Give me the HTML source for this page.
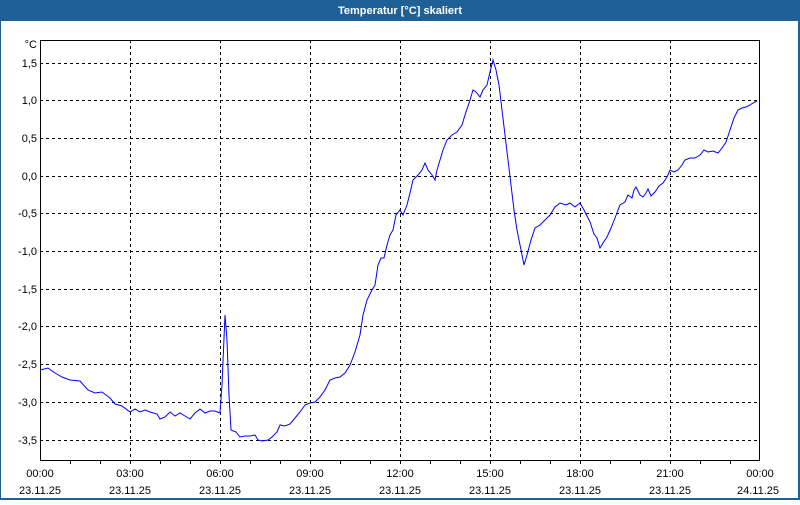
<!DOCTYPE html><html><head><style>body{margin:0;width:800px;height:500px;overflow:hidden;background:#fff;font-family:"Liberation Sans",sans-serif}</style></head><body>
<svg width="800" height="500" xmlns="http://www.w3.org/2000/svg" font-family="Liberation Sans, sans-serif" font-size="11">
<rect x="0" y="0" width="800" height="500" fill="#1f6097"/>
<rect x="1" y="21" width="797" height="477" fill="#fff"/>
<text x="400" y="14" fill="#fff" font-weight="bold" text-anchor="middle" font-size="11">Temperatur [°C] skaliert</text>
<g stroke="#000" stroke-dasharray="3,3" stroke-width="1">
<path d="M40 63.5H760M40 100.5H760M40 138.5H760M40 176.5H760M40 213.5H760M40 251.5H760M40 289.5H760M40 326.5H760M40 364.5H760M40 402.5H760M40 440.5H760"/>
<path d="M130.5 40V460M220.5 40V460M310.5 40V460M400.5 40V460M490.5 40V460M580.5 40V460M670.5 40V460"/>
</g>
<rect x="40.5" y="40.5" width="719" height="420" fill="none" stroke="#000"/>
<path stroke="#000" d="M70.5 460v4M100.5 460v4M130.5 460v4M160.5 460v4M190.5 460v4M220.5 460v4M250.5 460v4M280.5 460v4M310.5 460v4M340.5 460v4M370.5 460v4M400.5 460v4M430.5 460v4M460.5 460v4M490.5 460v4M520.5 460v4M550.5 460v4M580.5 460v4M610.5 460v4M640.5 460v4M670.5 460v4M700.5 460v4M730.5 460v4"/>
<g text-anchor="end" fill="#000">
<text x="37" y="48">°C</text><text x="37" y="67">1,5</text><text x="37" y="104">1,0</text><text x="37" y="142">0,5</text><text x="37" y="180">0,0</text><text x="37" y="217">-0,5</text><text x="37" y="255">-1,0</text><text x="37" y="293">-1,5</text><text x="37" y="330">-2,0</text><text x="37" y="368">-2,5</text><text x="37" y="406">-3,0</text><text x="37" y="444">-3,5</text>
</g>
<g text-anchor="middle" fill="#000">
<text x="40" y="477">00:00</text><text x="130" y="477">03:00</text><text x="220" y="477">06:00</text><text x="310" y="477">09:00</text><text x="400" y="477">12:00</text><text x="490" y="477">15:00</text><text x="580" y="477">18:00</text><text x="670" y="477">21:00</text><text x="760" y="477">00:00</text>
<text x="40" y="494">23.11.25</text><text x="130" y="494">23.11.25</text><text x="220" y="494">23.11.25</text><text x="310" y="494">23.11.25</text><text x="400" y="494">23.11.25</text><text x="490" y="494">23.11.25</text><text x="580" y="494">23.11.25</text><text x="670" y="494">23.11.25</text><text x="758" y="494">24.11.25</text>
</g>
<polyline fill="none" stroke="#0000ff" stroke-width="1" points="40,370 48,368 55,373 62,377 70,380 80,381 88,390 95,393 102,392 110,398 115,404 122,406 130,412 135,409 140,412 145,410 150,412 157,414 160,419 165,417 170,412 175,416 180,413 185,416 190,419 195,413 200,409 205,413 210,411 215,411 220,413 222,385 225,315 227,340 229,395 231,430 236,432 240,437 245,436 250,436 255,435 258,440 262,441 268,440 272,437 277,432 280,425 285,426 290,424 295,418 300,412 305,405 310,403 315,402 320,397 325,390 330,380 335,378 340,377 345,373 350,365 355,352 360,335 363,315 367,300 372,290 375,285 378,265 381,258 384,258 387,245 390,235 393,230 396,215 400,210 403,215 407,205 410,193 413,180 418,175 422,170 425,163 428,170 432,175 435,180 437,170 440,160 443,150 447,140 452,135 457,132 462,125 465,115 470,100 473,90 476,92 480,97 483,90 487,85 490,72 493,60 496,70 499,85 502,110 505,135 508,160 511,185 514,210 517,230 520,245 524,265 527,255 531,240 535,228 540,225 545,220 550,215 555,207 560,203 566,205 570,203 575,207 580,203 584,210 590,222 594,234 597,238 600,248 603,243 607,237 611,228 615,218 620,205 625,202 628,195 632,198 634,190 636,187 640,195 643,197 646,193 648,189 651,196 655,192 659,186 663,183 667,177 670,170 674,172 678,170 682,165 685,160 690,158 695,158 700,155 704,150 708,152 713,151 718,153 722,148 726,142 730,130 734,118 738,110 742,108 746,107 750,105 753,103 757,101"/>
</svg>
</body></html>
